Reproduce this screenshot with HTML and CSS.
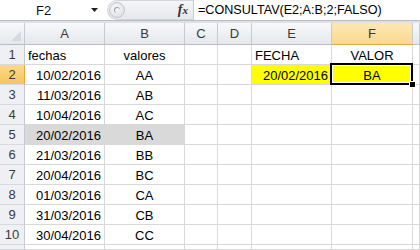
FILE: index.html
```html
<!DOCTYPE html>
<html>
<head>
<meta charset="utf-8">
<link rel="stylesheet" href="styles.css">
</head>
<body>
<div class="fbar">
  <div class="namebox">
    <span class="name">F2</span>
    <svg class="arrow" width="7" height="4" viewBox="0 0 7 4"><path d="M0 0H7L3.5 4Z" fill="#222"/></svg>
  </div>
  <div class="fxzone">
    <span class="grip"><span class="grip-in"></span></span>
    <span class="fx">f<span class="x">x</span></span>
  </div>
  <div class="formula">=CONSULTAV(E2;A:B;2;FALSO)</div>
</div>
<div class="sep"></div>
<div class="sheet">
  <div class="hd corner"><span class="tri"></span></div>
  <div class="hd">A</div><div class="hd">B</div><div class="hd">C</div><div class="hd">D</div><div class="hd">E</div><div class="hd sel">F</div><div class="hd"></div>

  <div class="rn">1</div><div class="c l">fechas</div><div class="c m">valores</div><div class="c"></div><div class="c"></div><div class="c l">FECHA</div><div class="c m">VALOR</div><div class="c"></div>
  <div class="rn sel">2</div><div class="c r">10/02/2016</div><div class="c m">AA</div><div class="c"></div><div class="c"></div><div class="c r y">20/02/2016</div><div class="c m y active">BA<span class="selbox"></span><span class="handle"></span></div><div class="c"></div>
  <div class="rn">3</div><div class="c r">11/03/2016</div><div class="c m">AB</div><div class="c"></div><div class="c"></div><div class="c"></div><div class="c"></div><div class="c"></div>
  <div class="rn">4</div><div class="c r">10/04/2016</div><div class="c m">AC</div><div class="c"></div><div class="c"></div><div class="c"></div><div class="c"></div><div class="c"></div>
  <div class="rn">5</div><div class="c r g">20/02/2016</div><div class="c m g">BA</div><div class="c"></div><div class="c"></div><div class="c"></div><div class="c"></div><div class="c"></div>
  <div class="rn">6</div><div class="c r">21/03/2016</div><div class="c m">BB</div><div class="c"></div><div class="c"></div><div class="c"></div><div class="c"></div><div class="c"></div>
  <div class="rn">7</div><div class="c r">20/04/2016</div><div class="c m">BC</div><div class="c"></div><div class="c"></div><div class="c"></div><div class="c"></div><div class="c"></div>
  <div class="rn">8</div><div class="c r">01/03/2016</div><div class="c m">CA</div><div class="c"></div><div class="c"></div><div class="c"></div><div class="c"></div><div class="c"></div>
  <div class="rn">9</div><div class="c r">31/03/2016</div><div class="c m">CB</div><div class="c"></div><div class="c"></div><div class="c"></div><div class="c"></div><div class="c"></div>
  <div class="rn">10</div><div class="c r">30/04/2016</div><div class="c m">CC</div><div class="c"></div><div class="c"></div><div class="c"></div><div class="c"></div><div class="c"></div>
  <div class="rn"></div><div class="c"></div><div class="c"></div><div class="c"></div><div class="c"></div><div class="c"></div><div class="c"></div><div class="c"></div>
</div>
</body>
</html>
```
FILE: styles.css
```css
* { box-sizing: border-box; }
html, body { margin: 0; padding: 0; }
body {
  width: 420px;
  height: 250px;
  overflow: hidden;
  background: #fff;
  font-family: "Liberation Sans", Arial, sans-serif;
  font-size: 13px;
  color: #000;
}
.fbar {
  display: flex;
  height: 20px;
  background: #fff;
}
.namebox {
  width: 104px;
  display: flex;
  align-items: center;
  padding-left: 36px;
  padding-right: 6px;
}
.name { flex: 1; color: #111; }
.arrow { display: block; }
.fxzone {
  width: 86px;
  display: flex;
  align-items: center;
  background: linear-gradient(#f4f5f7, #e6e8eb);
  border-radius: 10px 0 0 10px;
  border: 1px solid #d2d5da;
  border-right: none;
  margin-left: 3px;
}
.grip {
  width: 16px;
  height: 16px;
  border-radius: 50%;
  margin-left: 1px;
  background: radial-gradient(circle at 40% 40%, #fafafa, #d6d9dd);
  border: 1px solid #c2c6cc;
  display: flex;
  align-items: center;
  justify-content: center;
}
.grip-in {
  width: 6px;
  height: 6px;
  border-radius: 50%;
  border-top: 1px solid #9aa0a8;
  border-left: 1px solid #9aa0a8;
}
.fx {
  margin-left: auto;
  margin-right: 5px;
  font-family: "Liberation Serif", serif;
  font-style: italic;
  font-weight: bold;
  font-size: 14px;
  color: #333;
}
.fx .x { font-size: 11px; }
.formula {
  flex: 1;
  border-left: 1px solid #c8cbd0;
  padding-left: 4px;
  line-height: 20px;
  white-space: nowrap;
  font-size: 12.6px;
}
.sep {
  height: 3px;
  border-top: 1px solid #b9bdc3;
  background: #dde1e6;
}
.sheet {
  display: grid;
  grid-template-columns: 25px 80px 80px 33px 34px 80px 81px 1fr;
  grid-template-rows: 22px repeat(10, 20px) 5px;
  overflow: hidden;
}
.hd {
  background: linear-gradient(#f7f8fa, #e5e8ec);
  border-right: 1px solid #c6cad0;
  border-bottom: 1px solid #b9bec5;
  color: #3a3a3a;
  display: flex;
  align-items: center;
  justify-content: center;
}
.hd.sel {
  background: linear-gradient(#fde7b3, #f9d98e);
  border-bottom: 1px solid #e3a93a;
}
.corner { position: relative; }
.tri {
  position: absolute;
  right: 3px;
  bottom: 3px;
  width: 0;
  height: 0;
  border-left: 10px solid transparent;
  border-bottom: 10px solid #d6d9de;
}
.rn {
  background: #eef0f3;
  border-right: 1px solid #c6cad0;
  border-bottom: 1px solid #d6d9de;
  color: #3a3a3a;
  display: flex;
  align-items: center;
  justify-content: center;
}
.rn.sel {
  background: linear-gradient(#fbd98a, #f6c65f);
  border-right: 1px solid #e3a93a;
}
.c {
  border-right: 1px solid #d8d8d8;
  border-bottom: 1px solid #d8d8d8;
  display: flex;
  align-items: center;
  padding: 1px 3px 0;
  white-space: nowrap;
}
.l { justify-content: flex-start; }
.r { justify-content: flex-end; }
.m { justify-content: center; }
.y { background: #ffff00; }
.g { background: #d9d9d9; }
.active { position: relative; }
.selbox {
  position: absolute;
  left: -2px;
  top: -2px;
  right: -1px;
  bottom: -1px;
  border: 2px solid #000;
  box-shadow: inset 0 0 0 1px #fff;
}
.handle {
  position: absolute;
  right: -4px;
  bottom: -4px;
  width: 7px;
  height: 7px;
  background: #000;
  border: 1px solid #fff;
}
```
